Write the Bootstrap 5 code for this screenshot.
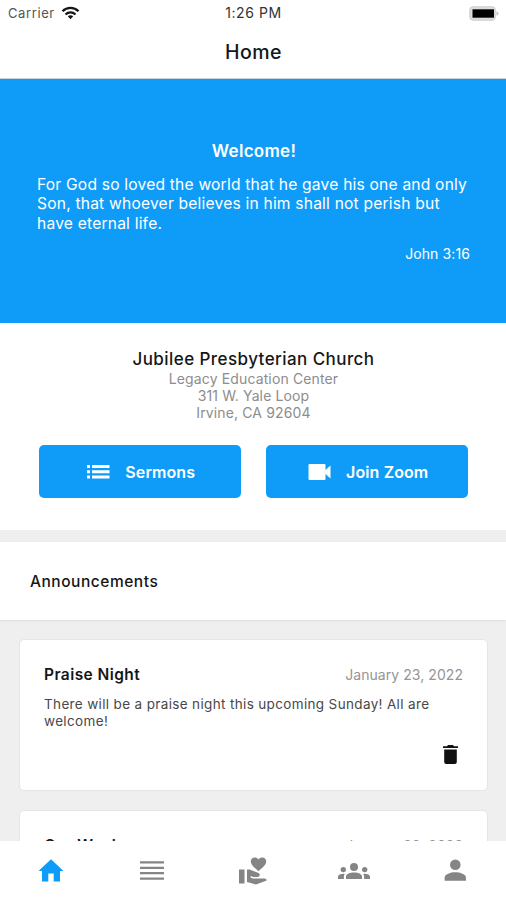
<!DOCTYPE html>
<html lang="en">
<head>
<meta charset="utf-8">
<meta name="viewport" content="width=device-width, initial-scale=1">
<title>Home</title>
<link rel="stylesheet" href="https://cdn.jsdelivr.net/npm/bootstrap@5.3.0/dist/css/bootstrap.min.css">
<style>
body{font-family:Inter,"Liberation Sans",sans-serif;color:#161616;letter-spacing:.2px}
svg{display:block;flex:none}
.screen{height:900px}
.status-bar{height:26px;padding:0 7px 0 8px;font-size:13px;line-height:26px;color:#333}
.status-bar>div{flex:1 1 0}
.carrier{letter-spacing:.6px;color:#555}
.clock{font-size:14px;letter-spacing:.6px}
.title-bar{height:53px;font-size:19.5px;line-height:52px;border-bottom:1px solid #c9d3de;letter-spacing:.45px;padding-left:1px}
.hero{height:244px;background:#0f9cf9;padding:60px 36px 0 37px}
.hero h2{font-size:17px;line-height:24px;letter-spacing:.3px;padding-left:1px;margin-bottom:12px}
.verse{font-size:15.6px;line-height:19.4px;margin-bottom:11px;letter-spacing:.2px}
.cite{font-size:14px;line-height:20px;letter-spacing:.1px}
.church{height:207px;padding:25px 38px 0 39px}
.church h3{font-size:17px;line-height:22px;letter-spacing:.43px}
.addr{font-size:14px;line-height:17px;color:#8d8d8d;letter-spacing:.13px}
.actions{margin-top:24px;gap:25px}
.action-btn{height:53px;border-radius:5px;background:#0f9cf9;color:#fff;font-size:16px;letter-spacing:.1px;gap:15.5px;padding:6px 11px 6px 12px}
.section-head{height:78px;margin-top:12px;padding:2px 0 0 30px;font-size:15.5px;letter-spacing:.53px;box-shadow:0 1px 2px #ddd}
.feed{background:#efefef}
.notice-list{padding:19px 18px 0 19px;row-gap:19px}
.notice{border:1px solid #e5e5e5;border-radius:5px;height:152px;padding:24px 24px 0 24px}
.notice h4{font-size:15.5px;line-height:22px;letter-spacing:.42px}
.notice-date{font-size:14px;line-height:21px;color:#959595;letter-spacing:.06px}
.notice-text{font-size:13.5px;line-height:17px;color:#484848;margin-top:10px;letter-spacing:.35px}
.trash-row{padding:15px 5px 0 0}
.tab-bar{height:59px;color:#858585}
.tab-bar a{color:inherit;height:59px}
.tab-bar a.active{color:#0f9cf9}
</style>
</head>
<body>
<div class="screen d-flex flex-column overflow-hidden bg-white">
  <header class="bg-white">
    <div class="status-bar d-flex align-items-center">
      <div class="d-flex align-items-center carrier"><span>Carrier</span>
        <svg class="ms-1" width="22" height="14" viewBox="-2.500 0 22 14" fill="none" stroke="#161616" stroke-width="2.3"><path d="M1 5.2C5.5.7 12.500.7 17 5.200M4 8.500C6.900 5.800 11.100 5.800 14 8.500"/><path d="M9 9.300c1.100 0 2 .4 2.700 1L9 13.200l-2.700-2.900c.7-.6 1.600-1 2.700-1z" fill="#161616" stroke="none"/></svg>
      </div>
      <span class="clock">1:26 PM</span>
      <div class="d-flex justify-content-end">
        <svg width="30" height="15" viewBox="0 0 30 15"><rect x=".8" y=".8" width="25.500" height="13.400" rx="3" fill="#ddd" stroke="#ccc"/><rect x="3.500" y="3.300" width="21.500" height="8.400" fill="#000"/><path d="M27.500 5.200q2 .8 2 2.300t-2 2.300z" fill="#bbb"/></svg>
      </div>
    </div>
    <h1 class="title-bar text-center fw-medium mb-0">Home</h1>
  </header>
  <main class="feed flex-fill overflow-hidden">
    <section class="hero text-white">
      <h2 class="text-center fw-semibold">Welcome!</h2>
      <p class="verse">For God so loved the world that he gave his one and only<br>Son, that whoever believes in him shall not perish but<br>have eternal life.</p>
      <p class="cite text-end mb-0">John 3:16</p>
    </section>
    <section class="church bg-white text-center">
      <h3 class="fw-medium mb-0">Jubilee Presbyterian Church</h3>
      <address class="addr mb-0">Legacy Education Center<br>311 W. Yale Loop<br>Irvine, CA 92604</address>
      <div class="actions d-flex">
        <button class="action-btn btn border-0 flex-fill w-50 d-flex align-items-center justify-content-center fw-semibold">
          <svg width="24" height="16" viewBox="0 0 24 16" fill="#fff"><path d="M1 1h3v3H1zM1 6.300h3v3H1zM1 11.600h3v3H1zM6 1h17.500v3H6zM6 6.300h17.500v3H6zM6 11.600h17.500v3H6z"/></svg>
          <span>Sermons</span>
        </button>
        <button class="action-btn btn border-0 flex-fill w-50 d-flex align-items-center justify-content-center fw-semibold">
          <svg width="24" height="18" viewBox="-.5 0 24 18" fill="#fff"><path d="M2 1h15q1 0 1 1v5l5-4.500v13L18 11v5q0 1-1 1H2q-1 0-1-1V2q0-1 1-1z"/></svg>
          <span>Join Zoom</span>
        </button>
      </div>
    </section>
    <h3 class="section-head bg-white fw-medium mb-0 d-flex align-items-center">Announcements</h3>
    <section class="notice-list d-grid">
      <article class="notice bg-white">
        <div class="d-flex justify-content-between align-items-start"><h4 class="fw-semibold mb-0">Praise Night</h4><span class="notice-date">January 23, 2022</span></div>
        <p class="notice-text mb-0">There will be a praise night this upcoming Sunday! All are<br>welcome!</p>
        <div class="trash-row d-flex justify-content-end"><svg width="15" height="19" viewBox="0 0 15 19" fill="#111"><path d="M0 1.200h4L5 0h5l1 1.200h4v1.900H0zM1.200 4.500h12.600V17q0 2-2 2H3.200q-2 0-2-2z"/></svg></div>
      </article>
      <article class="notice bg-white">
        <div class="d-flex justify-content-between align-items-start"><h4 class="fw-semibold mb-0">Our Week</h4><span class="notice-date">January 23, 2022</span></div>
      </article>
    </section>
  </main>
  <nav class="tab-bar bg-white d-flex" aria-label="Main">
    <a href="#" class="active flex-fill w-25 d-flex align-items-center justify-content-center" aria-label="Home"><svg width="26" height="24" viewBox="0 0 26 24" fill="currentColor"><path d="M13 .2 25.500 12H22v10.500h-6.300v-8h-5.400v8H4V12H.5z"/></svg></a>
    <a href="#" class="flex-fill w-25 d-flex align-items-center justify-content-center" aria-label="Sermons"><svg width="24" height="20" viewBox="0 0 24 20" fill="currentColor"><path d="M0 .3h24v2.200H0zM0 5.700h24v2.200H0zM0 11.100h24v2.200H0zM0 16.500h24v2.200H0z"/></svg></a>
    <a href="#" class="flex-fill w-25 d-flex align-items-center justify-content-center" aria-label="Giving"><svg width="30" height="28" viewBox="0 0 30 28" fill="currentColor"><path d="M1 12.500h5.500v14H1zM9 12.500h2.500l9 3.500q1.800 1 1 2.700-.6 1.300-2.300 1.300h-4l-2.300-.9-.5 1.300 2.600 1H27q1.700.2 1.700 2.200L18 27.500l-9-2.400zM20.500 14.200C15.500 10 12.800 7.600 12.800 4.600c0-4.200 5.200-5.500 7.700-2 2.500-3.500 7.700-2.200 7.700 2 0 3-2.700 5.400-7.700 9.600z"/></svg></a>
    <a href="#" class="flex-fill w-25 d-flex align-items-center justify-content-center" aria-label="Community"><svg width="32" height="18" viewBox="0 0 32 18" fill="currentColor"><circle cx="16" cy="5" r="4"/><circle cx="5.300" cy="7.600" r="2.700"/><circle cx="26.700" cy="7.600" r="2.700"/><path d="M8 17v-2.500C8 12 12 10.500 16 10.500s8 1.500 8 4V17zM0 17v-2.200c0-2 3-3.200 6.800-2.900-.6.900-.9 1.700-.9 2.600V17zM32 17v-2.200c0-2-3-3.200-6.800-2.900.6.900.9 1.700.9 2.600V17z"/></svg></a>
    <a href="#" class="flex-fill w-25 d-flex align-items-center justify-content-center" aria-label="Profile"><svg width="22" height="24" viewBox="0 1 22 24" fill="currentColor"><circle cx="11.300" cy="6.700" r="5.300"/><path d="M.6 22.700v-3c0-3.600 6-5.500 10.700-5.500S22 16.100 22 19.700v3z"/></svg></a>
  </nav>
</div>
<script src="https://cdn.jsdelivr.net/npm/bootstrap@5.3.0/dist/js/bootstrap.bundle.min.js"></script>
</body>
</html>
